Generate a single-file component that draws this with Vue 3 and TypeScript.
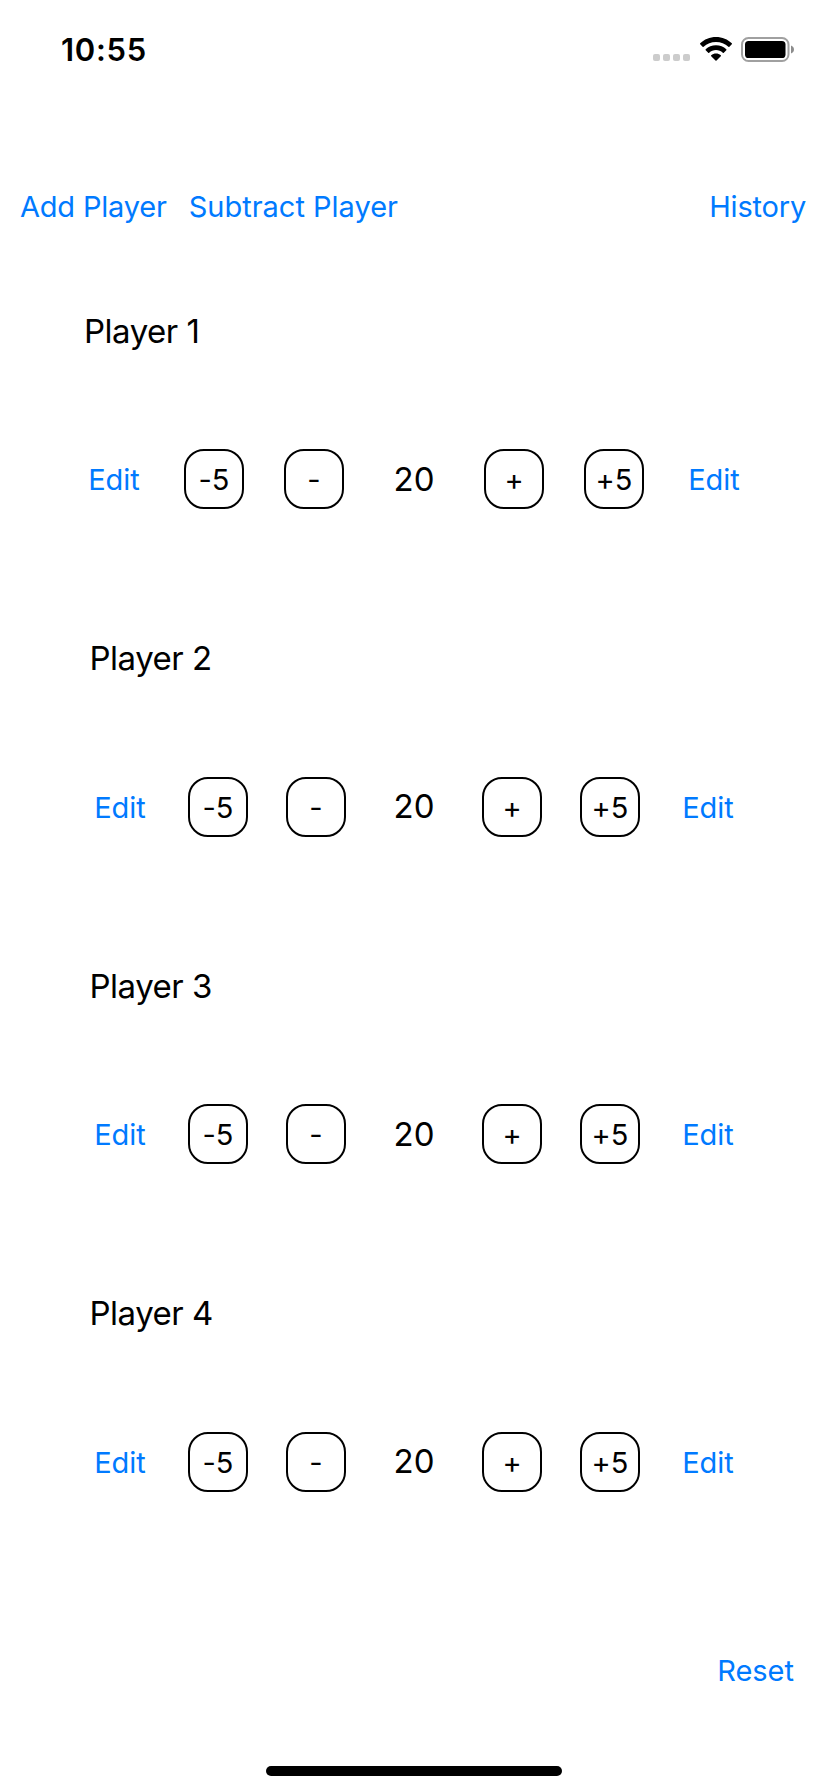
<script setup lang="ts">
import { ref } from 'vue'

interface Player {
  id: number
  name: string
  life: number
}

const START_LIFE = 20
const makePlayer = (id: number): Player => ({ id, name: `Player ${id}`, life: START_LIFE })

const players = ref<Player[]>([1, 2, 3, 4].map(makePlayer))

function addPlayer() {
  players.value.push(makePlayer(players.value.length + 1))
}
function subtractPlayer() {
  players.value.pop()
}
function change(player: Player, amount: number) {
  player.life += amount
}
function reset() {
  players.value.forEach((p) => (p.life = START_LIFE))
}
</script>

<template>
  <div class="screen">
    <header class="status">
      <span class="time">10:55</span>
      <div class="indicators">
        <div class="cell"><i v-for="n in 4" :key="n" /></div>
        <svg class="wifi" width="32" height="24" viewBox="0 0 32 24">
          <path d="M16 0C22.2 0 27.8 2.4 31.8 6.3Q32.2 6.8 31.8 7.3L29.4 9.7Q28.9 10.1 28.4 9.7C25.1 6.7 20.8 4.9 16 4.9S6.900 6.700 3.600 9.700Q3.100 10.100 2.600 9.700L.2 7.300Q-.2 6.800 .2 6.300C4.200 2.400 9.800 0 16 0Z" />
          <path d="M16 8.300C20 8.300 23.600 9.800 26.300 12.300Q26.700 12.800 26.300 13.300L23.800 15.700Q23.300 16.100 22.800 15.700C21 14.100 18.600 13.100 16 13.100S11 14.100 9.200 15.700Q8.700 16.100 8.200 15.700L5.700 13.300Q5.300 12.800 5.700 12.300C8.400 9.800 12 8.300 16 8.300Z" />
          <path d="M16 16.600C17.800 16.600 19.500 17.200 20.800 18.300Q21.300 18.800 20.800 19.300L16.500 23.600Q16 24 15.500 23.600L11.200 19.300Q10.700 18.800 11.200 18.300C12.500 17.200 14.200 16.600 16 16.600Z" />
        </svg>
        <svg class="battery" width="54" height="25" viewBox="0 0 54 25">
          <rect x="1" y="1" width="46.500" height="23" rx="6.500" fill="none" stroke="#a0a0a0" stroke-width="2" />
          <rect x="4" y="4" width="40.500" height="17" rx="3.600" />
          <path d="M50 8.500C51.800 9.200 53 10.700 53 12.500S51.800 15.800 50 16.500Z" fill="#8c8c8c" />
        </svg>
      </div>
    </header>

    <nav class="toolbar">
      <button class="link add" @click="addPlayer">Add Player</button>
      <button class="link subtract" @click="subtractPlayer">Subtract Player</button>
      <button class="link history">History</button>
    </nav>

    <main class="players">
      <section v-for="p in players" :key="p.id" class="player">
        <h2 class="name">{{ p.name }}</h2>
        <div class="controls">
          <button class="link edit">Edit</button>
          <button class="step" @click="change(p, -5)">-5</button>
          <button class="step" @click="change(p, -1)">-</button>
          <span class="life">{{ p.life }}</span>
          <button class="step" @click="change(p, 1)">+</button>
          <button class="step" @click="change(p, 5)">+5</button>
          <button class="link edit">Edit</button>
        </div>
      </section>
    </main>

    <footer class="footer">
      <button class="link reset" @click="reset">Reset</button>
      <div class="home" />
    </footer>
  </div>
</template>

<style>
body {
  background: #fff;
}
</style>

<style scoped>
.screen,
.screen * {
  box-sizing: border-box;
}
.screen {
  display: flex;
  flex-direction: column;
  width: 828px;
  height: 1792px;
  overflow: hidden;
  background: #fff;
  color: #000;
  font-family: Inter, Roboto, sans-serif;
  font-feature-settings: 'calt' 0;
}
button {
  margin: 0;
  padding: 0;
  border: 0;
  background: none;
  color: inherit;
  font: inherit;
  font-feature-settings: inherit;
  white-space: nowrap;
}
.status {
  display: flex;
  flex: none;
  justify-content: space-between;
  height: 187px;
  padding: 30px 33px 0 61px;
}
.time {
  height: 40px;
  font-size: 31px;
  font-weight: 600;
  letter-spacing: 0.700px;
  line-height: 40px;
}
.indicators {
  display: flex;
  height: 25px;
  margin-top: 7px;
}
.cell {
  display: flex;
  gap: 3px;
  margin: 17px 9.500px 0 0;
}
.cell i {
  width: 7px;
  height: 7px;
  border-radius: 2px;
  background: #ccc;
}
.wifi {
  margin-right: 9.500px;
}
.link {
  color: #007aff;
  font-size: 29px;
  line-height: 40px;
}
.toolbar {
  display: flex;
  flex: none;
  height: 62px;
  padding: 0 22px 0 20px;
}
.add {
  height: 40px;
  margin-right: 22px;
  letter-spacing: -0.200px;
}
.subtract {
  height: 40px;
}
.history {
  height: 40px;
  margin-left: auto;
  letter-spacing: -0.200px;
}
.players {
  display: grid;
  flex: none;
  grid-template-rows: repeat(4, 327.670px);
  justify-items: center;
  padding-top: 61.500px;
}
.player {
  width: 686px;
}
.player:first-child {
  width: 700px;
}
.name {
  margin: 0 0 98.500px;
  padding-left: 18.500px;
  font-size: 33px;
  font-weight: 400;
  letter-spacing: -0.480px;
  line-height: 40px;
}
.player:first-child .name {
  padding-left: 20px;
}
.controls {
  display: grid;
  grid-template-columns: repeat(7, 1fr);
  align-items: center;
  justify-items: center;
  height: 60px;
}
.edit {
  padding-top: 2px;
}
.step {
  width: 60px;
  height: 60px;
  padding-top: 2px;
  border: 2px solid #000;
  border-radius: 20px;
  font-size: 29px;
  line-height: 54px;
}
.life {
  margin-bottom: 1px;
  font-size: 33px;
  line-height: 40px;
}
.footer {
  display: flex;
  flex: 1;
  flex-direction: column;
  align-items: center;
}
.reset {
  align-self: flex-end;
  margin: 29.500px 34px 75px 0;
}
.home {
  width: 296px;
  height: 10px;
  border-radius: 5px;
  background: #000;
}
</style>
